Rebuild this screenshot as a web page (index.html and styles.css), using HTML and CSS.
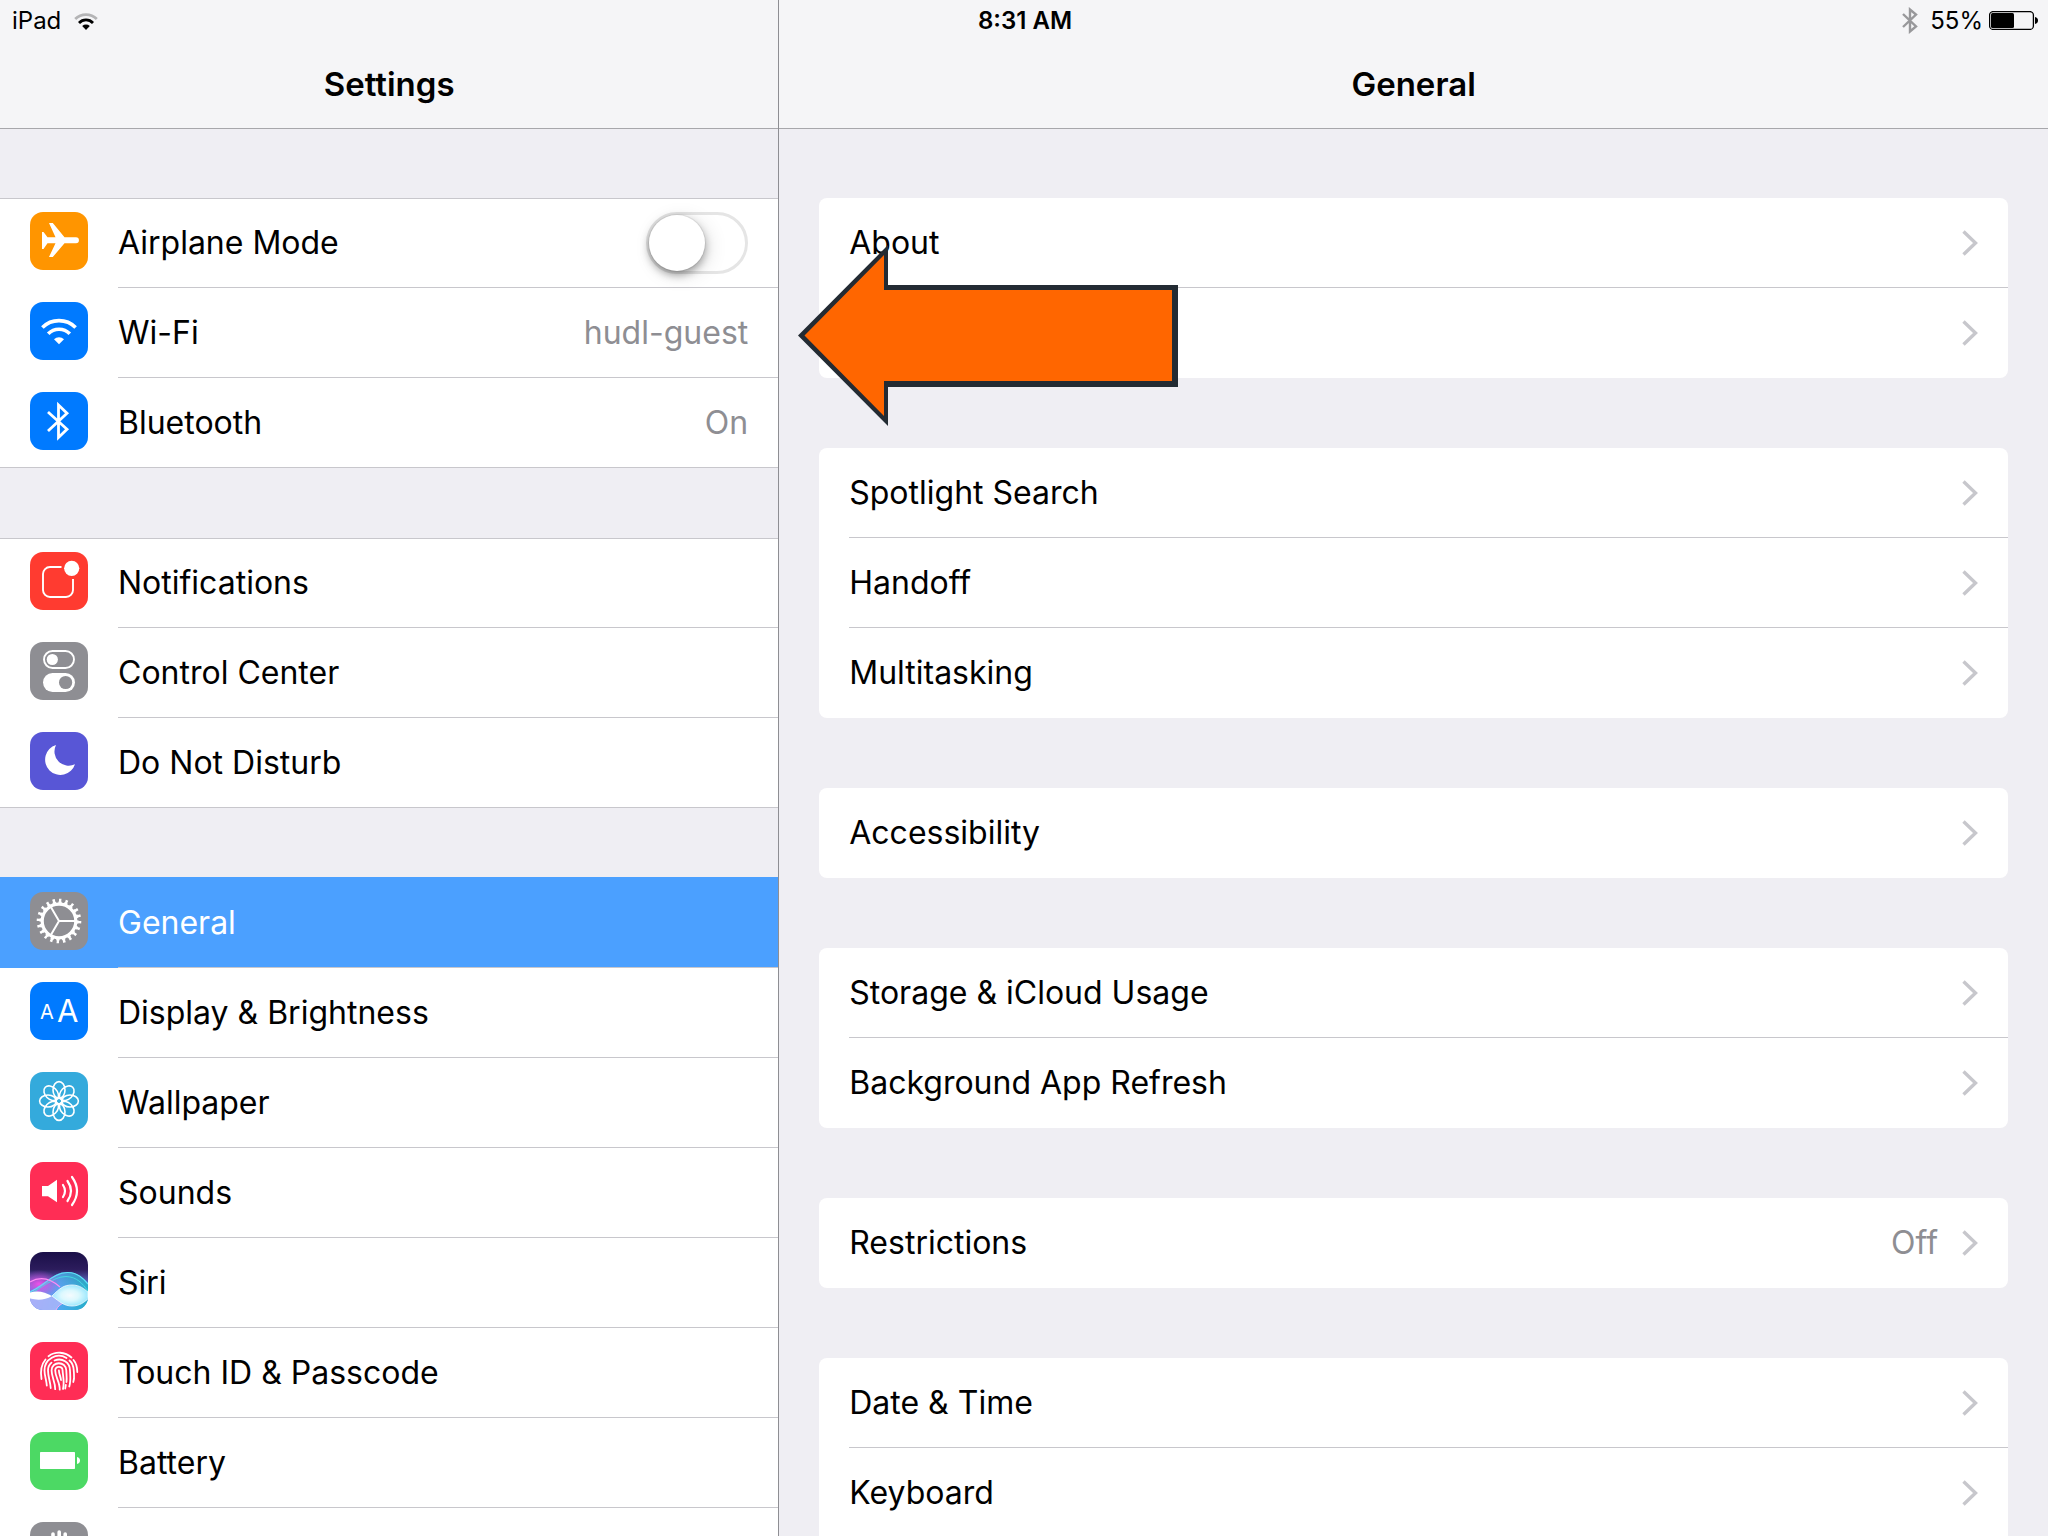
FILE: index.html
```html
<!DOCTYPE html>
<html lang="en">
<head>
  <meta charset="utf-8">
  <meta name="viewport" content="width=device-width, initial-scale=1">
  <title>Settings</title>
  <link rel="stylesheet" href="styles.css">
</head>
<body>
  <svg class="defs" aria-hidden="true">
    <symbol id="chevron" viewBox="0 0 16 26">
      <path d="M1.5 1.5 L13.5 13 L1.5 24.5" fill="none" stroke="#c7c7cc" stroke-width="3.4"/>
    </symbol>
  </svg>

  <div class="status-bar">
    <div class="status-left">
      <span>iPad</span>
      <svg width="24" height="18" viewBox="0 0 24 18" fill="none">
        <path d="M1.2 7 A15.3 15.3 0 0 1 22.8 7" stroke="#b4b4b6" stroke-width="2.8"/>
        <path d="M5 10.9 A9.8 9.8 0 0 1 19 10.9" stroke="#000" stroke-width="2.8"/>
        <path d="M12 18 L8.2 14 A5.6 5.6 0 0 1 15.8 14 Z" fill="#000"/>
      </svg>
    </div>
    <div class="status-time">8:31 AM</div>
    <div class="status-right">
      <svg class="status-bt" width="16" height="27" viewBox="0 0 16 27" fill="none">
        <path d="M1 7 L14 19.5 L8 24.5 V2.5 L14 7.5 L1 20" stroke="#98989b" stroke-width="2.4"/>
      </svg>
      <span>55%</span>
      <svg width="49" height="19" viewBox="0 0 49 19">
        <rect x="0.6" y="0.6" width="43.8" height="17.8" rx="3.5" fill="none" stroke="#000" stroke-width="1.3"/>
        <rect x="2" y="2" width="23" height="15" rx="1.5"/>
        <path d="M46 6 C50 6.5 50 12.5 46 13 Z"/>
      </svg>
    </div>
  </div>

  <div class="split">
    <nav class="pane sidebar">
      <h1 class="pane-title">Settings</h1>

      <div class="list">
        <label class="row" for="airplane">
          <svg class="icon orange" viewBox="0 0 58 58">
            <path d="M12 20 H13.5 L17.5 25.3 H25.5 L19 11 H22.8 L34.5 25.3 H46 A2.9 2.9 0 0 1 46 31.2 H34.5 L22.8 45 H19 L25.5 31.2 H17.5 L13.5 37 H12 V28.2 Z" fill="#fff"/>
          </svg>
          <span class="row-body">
            <span class="label">Airplane Mode</span>
            <input class="switch" type="checkbox" role="switch" id="airplane">
          </span>
        </label>
        <a class="row" href="#">
          <svg class="icon blue" viewBox="0 0 58 58" fill="none" stroke="#fff" stroke-width="3.6">
            <path d="M12.4 25.6 A23.3 23.3 0 0 1 45.600 25.600"/>
            <path d="M18.2 31.8 A15 15 0 0 1 39.8 31.8"/>
            <path d="M29 42.3 L24 37.2 A7.4 7.4 0 0 1 34 37.2 Z" fill="#fff" stroke="none"/>
          </svg>
          <span class="row-body"><span class="label">Wi-Fi</span><span class="value">hudl-guest</span></span>
        </a>
        <a class="row" href="#">
          <svg class="icon blue" viewBox="0 0 58 58" fill="none" stroke="#fff" stroke-width="2.8">
            <path d="M18 20 L37 37.2 L28.5 45.5 V13 L37 21.2 L18 39"/>
          </svg>
          <span class="row-body"><span class="label">Bluetooth</span><span class="value">On</span></span>
        </a>
      </div>

      <div class="list">
        <a class="row" href="#">
          <svg class="icon red" viewBox="0 0 58 58" fill="none" stroke="#fff" stroke-width="1.9">
            <path d="M31.5 15 H20 A7 7 0 0 0 13 22 V38 A7 7 0 0 0 20 45 H36 A7 7 0 0 0 43 38 V27"/>
            <circle cx="41.7" cy="16.3" r="7.6" fill="#fff" stroke="none"/>
          </svg>
          <span class="row-body"><span class="label">Notifications</span></span>
        </a>
        <a class="row" href="#">
          <svg class="icon gray" viewBox="0 0 58 58" fill="#fff">
            <rect x="14" y="9" width="30" height="17" rx="8.5" fill="none" stroke="#fff" stroke-width="1.9"/>
            <circle cx="22.3" cy="17.5" r="5.6"/>
            <rect x="13" y="31" width="32" height="19" rx="9.5"/>
            <circle cx="35.6" cy="40.5" r="6.6" fill="#8e8e93"/>
          </svg>
          <span class="row-body"><span class="label">Control Center</span></span>
        </a>
        <a class="row" href="#">
          <svg class="icon purple" viewBox="0 0 58 58">
            <path d="M26 13 A15.3 15.3 0 1 0 45 32.3 A14.3 14.3 0 0 1 26 13 Z" fill="#fff"/>
          </svg>
          <span class="row-body"><span class="label">Do Not Disturb</span></span>
        </a>
      </div>

      <div class="list">
        <a class="row selected" href="#" aria-current="page">
          <svg class="icon gray" viewBox="0 0 58 58" fill="none" stroke="#fff">
            <circle cx="29" cy="29" r="16.8" stroke-width="3.2"/>
            <circle cx="29" cy="29" r="20" stroke-width="4.6" pathLength="80" stroke-dasharray="1.5 2.5"/>
            <circle cx="29" cy="29" r="18.5" stroke-width="2" pathLength="80" stroke-dasharray="2.4 1.6" stroke-dashoffset="0.45"/>
            <path d="M29 29 H45 M29 29 L21 15.2 M29 29 L21 42.8" stroke-width="2"/>
          </svg>
          <span class="row-body"><span class="label">General</span></span>
        </a>
        <a class="row" href="#">
          <svg class="icon blue" viewBox="0 0 58 58" aria-hidden="true">
            <text class="glyph-small" x="10" y="37">A</text>
            <text class="glyph-large" x="27" y="40">A</text>
          </svg>
          <span class="row-body"><span class="label">Display &amp; Brightness</span></span>
        </a>
        <a class="row" href="#">
          <svg class="icon sky" viewBox="0 0 58 58" fill="none" stroke="#fff" stroke-width="1.6">
            <defs>
              <path id="petal" d="M29 26.2 C26 23.5 22.7 19.5 22.7 15.9 A6.3 6.3 0 0 1 35.3 15.9 C35.3 19.5 32 23.5 29 26.2 Z M29 21.500 L24.500 12 M29 21.500 L33.500 12" />
              <ellipse id="leaf" cx="29" cy="18" rx="6" ry="8.4"/>
            </defs>
            <use href="#leaf"/>
            <use href="#leaf" transform="rotate(45 29 29)"/>
            <use href="#leaf" transform="rotate(90 29 29)"/>
            <use href="#leaf" transform="rotate(135 29 29)"/>
            <use href="#leaf" transform="rotate(180 29 29)"/>
            <use href="#leaf" transform="rotate(225 29 29)"/>
            <use href="#leaf" transform="rotate(270 29 29)"/>
            <use href="#leaf" transform="rotate(315 29 29)"/>
            <circle cx="29" cy="29" r="3"/>
          </svg>
          <span class="row-body"><span class="label">Wallpaper</span></span>
        </a>
        <a class="row" href="#">
          <svg class="icon pink" viewBox="0 0 58 58" fill="none" stroke="#fff" stroke-width="2.2" stroke-linecap="round">
            <path d="M12 24 H18 L27 17.7 V40.3 L18 34.3 H12 Z" fill="#fff" stroke="none"/>
            <path d="M33 23 Q37 29 33 35"/>
            <path d="M37.5 19 Q44.5 29 37.5 39"/>
            <path d="M42 15 Q52 29 42 43"/>
          </svg>
          <span class="row-body"><span class="label">Sounds</span></span>
        </a>
        <a class="row" href="#">
          <svg class="icon" viewBox="0 0 58 58">
            <defs>
              <linearGradient id="siri-bg" x1="0" y1="0" x2="0" y2="1">
                <stop offset="0" stop-color="#1a0f48"/>
                <stop offset="0.3" stop-color="#2c1c5c"/>
                <stop offset="0.6" stop-color="#6a7fe0"/>
                <stop offset="1" stop-color="#2f8fe0"/>
              </linearGradient>
              <linearGradient id="siri-wave" x1="0" y1="0" x2="1" y2="0">
                <stop offset="0" stop-color="#9a8cf4"/>
                <stop offset="0.5" stop-color="#56aef4"/>
                <stop offset="1" stop-color="#1fb8c4"/>
              </linearGradient>
              <radialGradient id="siri-pink">
                <stop offset="0" stop-color="#f050e8"/>
                <stop offset="1" stop-color="#c040d8" stop-opacity="0"/>
              </radialGradient>
              <radialGradient id="siri-glow">
                <stop offset="0" stop-color="#fff"/>
                <stop offset="0.5" stop-color="#e4fcff"/>
                <stop offset="1" stop-color="#a4ecff"/>
              </radialGradient>
            </defs>
            <rect width="58" height="58" fill="url(#siri-bg)"/>
            <path d="M0 42 C14 34 22 20 37 20 C48 20 53 26 58 32 V58 H0 Z" fill="url(#siri-wave)" opacity="0.8"/>
            <ellipse cx="9" cy="32" rx="21" ry="14" fill="url(#siri-pink)"/>
            <path d="M0 40 C14 34 24 20 38 20.5 C48 21 53 26 58 32" fill="none" stroke="#5fe0f8" stroke-width="1.2"/>
            <path d="M0 42 C12 36 22 25 36 24.5 C47 25 52 31 58 39" fill="none" stroke="#43d8e0" stroke-width="1"/>
            <path d="M0 30 C10 24 20 26 30 35" fill="none" stroke="#ff8cf4" stroke-width="1.2"/>
            <path d="M0 44 H22 L34 50 C30 52 28 55 26 58 H0 Z" fill="#b0b8fa" opacity="0.8"/>
            <path d="M26 58 C28 54 31 52 35 50" fill="none" stroke="#f4a8f4" stroke-width="1"/>
            <path d="M22 44 C30 36 34 33 42 33 C50 33 54 37 58 40 V47 C54 50 50 54 42 54 C34 54 30 50 22 44 Z" fill="url(#siri-glow)" opacity="0.95" stroke="#fff" stroke-width="0.8"/>
            <path d="M0 40.5 C8 38 15 40 22 44 C15 48 8 48.5 0 46.5 Z" fill="#fff"/>
          </svg>
          <span class="row-body"><span class="label">Siri</span></span>
        </a>
        <a class="row" href="#">
          <svg class="icon pink" viewBox="0 0 58 58" fill="none" stroke="#fff" stroke-width="1.8" stroke-linecap="round">
            <path d="M18.5 14.2 A18.2 18.2 0 0 1 41.5 15.5"/>
            <path d="M11.5 37 C10.5 31 10 24 15.5 17.5"/>
            <path d="M43.5 18 C46.5 21.5 47.3 25 47.3 30"/>
            <path d="M16.8 43.5 C16.5 38 14.5 34 14.5 28.5 A14.4 14.4 0 0 1 36.5 16"/>
            <path d="M39.5 18.5 C42.5 21 43.7 25 43.8 29 C43.9 33 44.8 36 43.3 40"/>
            <path d="M20.7 46 C20.5 40 18 35 18 28.5 C18 25 19.5 22.3 21.5 20.6"/>
            <path d="M24.5 18.5 C32 15.5 40 20 40 28.5 C40.2 34 41 39 39.3 44.5"/>
            <path d="M25.2 47.2 C25.3 40 21.6 35 21.6 28.5 C21.7 18.8 36 18.8 36.3 28.5 C36.4 32 37 36 36.5 40"/>
            <path d="M35.8 43 L35.2 46.5"/>
            <path d="M29.7 47.6 C30 40 25.2 35 25.2 28.5 C25.3 23.7 32.5 23.7 32.6 28.5 C32.7 33 34.8 40 33 47"/>
            <path d="M28.9 28.5 C29 32 30.5 34 31 38"/>
          </svg>
          <span class="row-body"><span class="label">Touch ID &amp; Passcode</span></span>
        </a>
        <a class="row" href="#">
          <svg class="icon green" viewBox="0 0 58 58" fill="#fff">
            <rect x="10" y="20" width="35" height="17" rx="0.8"/>
            <path d="M47 25 C51 25.5 51 31.5 47 32 Z"/>
          </svg>
          <span class="row-body"><span class="label">Battery</span></span>
        </a>
        <a class="row" href="#" aria-label="Privacy">
          <svg class="icon gray" viewBox="0 0 58 58" fill="none" stroke="#fff" stroke-width="3.6" stroke-linecap="round">
            <path d="M23 30 V12 M29.2 30 V10 M35.2 30 V12 M40.5 32 V19 M23 38 L15 29"/>
            <path d="M21.2 26 H42.3 V38 C42 50 24 50 21.2 38 Z" fill="#fff" stroke="none"/>
          </svg>
          <span class="row-body"></span>
        </a>
      </div>
    </nav>

    <main class="pane detail">
      <h2 class="pane-title">General</h2>

      <div class="card">
        <a class="row" href="#"><span class="row-body"><span class="label">About</span><svg class="chevron"><use href="#chevron"/></svg></span></a>
        <a class="row" href="#"><span class="row-body"><span class="label">Software Update</span><svg class="chevron"><use href="#chevron"/></svg></span></a>
        <!-- callout pointing at the Wi-Fi row -->
        <svg class="arrow" width="380" height="180" viewBox="0 0 380 180" aria-hidden="true">
          <path d="M0 89.5 L90 -1 V39 H380 V141 H90 V180 Z" fill="#232b33"/>
          <path d="M6.5 89.5 L86 9 V44 H374 V135 H86 V170 Z" fill="#ff6600"/>
        </svg>
      </div>

      <div class="card">
        <a class="row" href="#"><span class="row-body"><span class="label">Spotlight Search</span><svg class="chevron"><use href="#chevron"/></svg></span></a>
        <a class="row" href="#"><span class="row-body"><span class="label">Handoff</span><svg class="chevron"><use href="#chevron"/></svg></span></a>
        <a class="row" href="#"><span class="row-body"><span class="label">Multitasking</span><svg class="chevron"><use href="#chevron"/></svg></span></a>
      </div>

      <div class="card">
        <a class="row" href="#"><span class="row-body"><span class="label">Accessibility</span><svg class="chevron"><use href="#chevron"/></svg></span></a>
      </div>

      <div class="card">
        <a class="row" href="#"><span class="row-body"><span class="label">Storage &amp; iCloud Usage</span><svg class="chevron"><use href="#chevron"/></svg></span></a>
        <a class="row" href="#"><span class="row-body"><span class="label">Background App Refresh</span><svg class="chevron"><use href="#chevron"/></svg></span></a>
      </div>

      <div class="card">
        <a class="row" href="#"><span class="row-body"><span class="label">Restrictions</span><span class="value">Off</span><svg class="chevron"><use href="#chevron"/></svg></span></a>
      </div>

      <div class="card card-open">
        <a class="row" href="#"><span class="row-body"><span class="label">Date &amp; Time</span><svg class="chevron"><use href="#chevron"/></svg></span></a>
        <a class="row" href="#"><span class="row-body"><span class="label">Keyboard</span><svg class="chevron"><use href="#chevron"/></svg></span></a>
      </div>
    </main>
  </div>
</body>
</html>
```

FILE: styles.css
```css
* {
  box-sizing: border-box;
}

body {
  margin: 0;
  height: 100vh;
  overflow: hidden;
  background: #efeef3;
  color: #000;
  font-family: Inter, "Liberation Sans", sans-serif;
  font-size: 32px;
}

.defs {
  position: absolute;
  width: 0;
  height: 0;
}

/* status bar lies over both pane titles */
.status-bar {
  position: absolute;
  top: 0;
  left: 0;
  right: 0;
  display: grid;
  grid-template-columns: 1fr auto 1fr;
  align-items: center;
  height: 41px;
  padding: 0 10px 0 12px;
  font-size: 24px;
}

.status-left,
.status-right {
  display: flex;
  align-items: center;
}

.status-left {
  gap: 13px;
}

.status-right {
  justify-content: flex-end;
  gap: 6px;
}

.status-bt {
  margin-right: 6px;
}

.status-time {
  font-weight: 600;
}

/* two panes */
.split {
  display: grid;
  grid-template-columns: minmax(0, 38fr) minmax(0, 62fr);
  height: 100%;
}

.pane {
  display: flex;
  flex-direction: column;
  gap: 70px;
  overflow: hidden;
}

.pane > * {
  flex-shrink: 0;
}

.pane-title {
  height: 129px;
  margin: 0 0 -1px;
  padding-top: 41px;
  border-bottom: 1px solid #a7a7ab;
  background: #f5f5f7;
  font-size: 33px;
  font-weight: 600;
  line-height: 87px;
  text-align: center;
}

.detail {
  border-left: 1px solid #8e8e93;
}

.list {
  background: #fff;
  box-shadow: inset 0 1px #c8c7cc, inset 0 -1px #c8c7cc;
}

.card {
  position: relative;
  margin: 0 40px;
  border-radius: 8px;
  background: #fff;
}

/* runs on past the bottom of the window */
.card-open {
  border-radius: 8px 8px 0 0;
}

.row {
  display: flex;
  padding-left: 30px;
  color: inherit;
  text-decoration: none;
}

.row-body {
  flex: 1;
  display: flex;
  align-items: center;
  height: 90px;
  padding-right: 30px;
  border-bottom: 1px solid #c8c7cc;
}

.list .row:last-child .row-body,
.card .row:last-of-type .row-body {
  border-bottom-color: transparent;
}

.selected {
  background: #4ba0ff;
  box-shadow: 0 -1px #4ba0ff;
  color: #fff;
}

.label {
  flex: 1;
}

.value {
  color: #8e8e93;
}

.chevron {
  width: 16px;
  height: 26px;
  margin-left: 24px;
}

/* row icons */
.icon {
  width: 58px;
  height: 58px;
  margin: 14px 30px 0 0;
  border-radius: 13px;
}

.orange { background: #ff9500; }
.blue { background: #007aff; }
.red { background: #ff3b30; }
.gray { background: #8e8e93; }
.purple { background: #5856d6; }
.sky { background: #34aadc; }
.pink { background: #ff2d55; }
.green { background: #4cd964; }

.glyph-small,
.glyph-large {
  fill: #fff;
}

.glyph-small {
  font-size: 20px;
}

.glyph-large {
  font-size: 31px;
}

.switch {
  appearance: none;
  width: 102px;
  height: 62px;
  margin: 0;
  border: 3px solid #e5e5e5;
  border-radius: 31px;
  background: #fff;
  cursor: pointer;
}

.switch::before {
  content: "";
  display: block;
  width: 56px;
  height: 56px;
  border-radius: 50%;
  background: #fff;
  box-shadow: 0 0 0 1px rgba(0, 0, 0, 0.06), 0 4px 8px rgba(0, 0, 0, 0.35), 4px 4px 20px rgba(0, 0, 0, 0.12);
}

.switch:checked {
  border-color: #4cd964;
  background: #4cd964;
}

.switch:checked::before {
  margin-left: 40px;
}

.arrow {
  position: absolute;
  top: 48px;
  left: -21px;
  overflow: visible;
  pointer-events: none;
}
```
